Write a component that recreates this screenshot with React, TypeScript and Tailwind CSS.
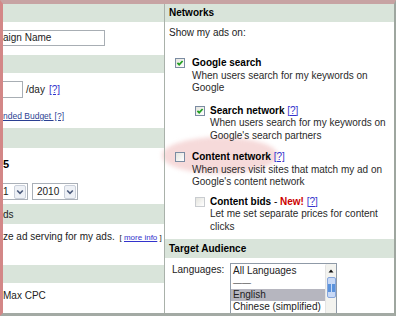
import React from "react";

function Check({ checked = false, disabled = false }: { checked?: boolean; disabled?: boolean }) {
  return (
    <span
      className={`mt-[1px] flex h-[10px] w-[10px] shrink-0 items-center justify-center border bg-gradient-to-br from-[#e4e4de] to-white ${
        disabled ? "border-[#c9ccd0]" : "border-[#7b8ca2]"
      }`}
    >
      {checked && (
        <svg width="8" height="8" viewBox="0 0 8 8">
          <path d="M1.4 3.8 L3.2 5.7 L6.6 2" stroke="#22a022" strokeWidth="1.7" fill="none" />
        </svg>
      )}
    </span>
  );
}

function Help() {
  return <span className="font-normal text-[#3333cc] underline">[?]</span>;
}

function Option({
  indent,
  gap,
  checked,
  disabled,
  title,
  lines,
  className = "",
}: {
  indent: string;
  gap: string;
  checked?: boolean;
  disabled?: boolean;
  title: React.ReactNode;
  lines: string[];
  className?: string;
}) {
  return (
    <div className={`flex items-start ${indent} ${className}`}>
      <Check checked={checked} disabled={disabled} />
      <div className={`${gap} leading-[12.5px]`}>
        <div className="font-bold text-black">{title}</div>
        {lines.map((l) => (
          <div key={l} className="text-[#2a2a2a]">
            {l}
          </div>
        ))}
      </div>
    </div>
  );
}

function Select({ value, width }: { value: string; width: string }) {
  return (
    <div className={`flex h-[17px] ${width} items-center border border-[#aab0b8] bg-white`}>
      <span className="leading-none">{value}</span>
      <span className="ml-auto mr-[1px] flex h-[14px] w-[12px] items-center justify-center rounded-[2px] border border-[#c9cfda] bg-[#eef1f6]">
        <svg width="8" height="6" viewBox="0 0 8 6">
          <path d="M1.2 1.5 L4 4.3 L6.8 1.5" stroke="#4b5b7c" strokeWidth="1.6" fill="none" />
        </svg>
      </span>
    </div>
  );
}

const band = "bg-[#d9e4da]";

export default function App() {
  return (
    <div className="relative h-[317px] w-[400px] overflow-hidden bg-white font-['Liberation_Sans',Arial,sans-serif] text-[10px] text-[#222]">
      <div className="absolute left-[162px] top-[137px] h-[37px] w-[116px] rounded-[50%] bg-[#f6dada] blur-[2px]" />

      <div className="relative flex h-[316px] w-[396px] border-l-[3px] border-t-[4px] border-r-2 border-b-[3px] border-l-[#d38787] border-t-[#c7a3a3] border-r-[#9ea69f] border-b-[#a3aaa4]">
        {/* left column, scrolled off to the left */}
        <div className="flex w-[162px] shrink-0 flex-col overflow-hidden border-r border-[#a9b1aa]">
          <div className={`h-[18px] ${band}`} />
          <div className="h-[33px] pt-[8px]">
            <div className="flex h-[16px] w-[102px] items-center border border-l-0 border-[#a8aeb4] leading-none">
              aign Name
            </div>
          </div>
          <div className={`h-[18px] ${band}`} />
          <div className="h-[55px] pt-[8px]">
            <div className="flex items-center">
              <div className="h-[17px] w-[20px] border border-l-0 border-[#a8aeb4]" />
              <span className="ml-[3px]">/day</span>
              <span className="ml-[4px] text-[#3333cc] underline">[?]</span>
            </div>
            <div className="mt-[12px] text-[8.5px] leading-[12px] text-[#2b3f92] underline">
              nded Budget <span className="ml-[1px]">[?]</span>
            </div>
          </div>
          <div className={`h-[20px] ${band}`} />
          <div className="h-[56px] pt-[10px]">
            <div className="text-[11px] font-bold leading-[12px] text-black">5</div>
            <div className="mt-[13px] flex gap-[4px]">
              <Select value="1" width="w-[25px] border-l-0" />
              <Select value="2010" width="w-[46px] pl-[4px]" />
            </div>
          </div>
          <div className={`flex h-[20px] items-center ${band}`}>ds</div>
          <div className="h-[41px] pt-[7px] leading-[12px]">
            ze ad serving for my ads.{" "}
            <span className="ml-[2px] text-[8px]">
              [ <span className="text-[#3333cc] underline">more info</span> ]
            </span>
          </div>
          <div className={`h-[18px] ${band}`} />
          <div className="pt-[7px] leading-[12px]">Max CPC</div>
        </div>

        {/* right column */}
        <div className="flex flex-1 flex-col overflow-hidden">
          <div className={`h-[18px] pl-[4px] font-bold leading-[18px] text-black ${band}`}>Networks</div>
          <div className="mt-[5px] pl-[4px] leading-[12px]">Show my ads on:</div>

          <Option
            className="mt-[18px]"
            indent="ml-[10px]"
            gap="ml-[7px]"
            checked
            title="Google search"
            lines={["When users search for my keywords on", "Google"]}
          />
          <Option
            className="mt-[10px]"
            indent="ml-[30px]"
            gap="ml-[5px]"
            checked
            title={
              <>
                Search network <Help />
              </>
            }
            lines={["When users search for my keywords on", "Google's search partners"]}
          />
          <Option
            className="mt-[9px]"
            indent="ml-[10px]"
            gap="ml-[7px]"
            title={
              <>
                Content network <Help />
              </>
            }
            lines={["When users visit sites that match my ad on", "Google's content network"]}
          />
          <Option
            className="mt-[7px]"
            indent="ml-[30px]"
            gap="ml-[5px]"
            disabled
            title={
              <>
                Content bids <span className="font-normal">-</span>{" "}
                <span className="text-[#cc0000]">New!</span> <Help />
              </>
            }
            lines={["Let me set separate prices for content", "clicks"]}
          />

          <div className={`mt-[6px] h-[19px] pl-[4px] font-bold leading-[19px] text-black ${band}`}>
            Target Audience
          </div>
          <div className="mt-[5px] flex pl-[7px]">
            <div className="mt-[1px] w-[58px] leading-[12px]">Languages:</div>
            <div className="flex h-[60px] w-[107px] border border-[#8f9aa7] bg-white">
              <div className="flex-1 pt-[1px] leading-[12px]">
                <div className="pl-[2px]">All Languages</div>
                <div className="pl-[2px] text-[9px]">——</div>
                <div className="bg-[#b6b6bf] pl-[2px]">English</div>
                <div className="pl-[2px]">Chinese (simplified)</div>
                <div className="pl-[2px]">Chinese (traditional)</div>
              </div>
              <div className="flex w-[11px] flex-col items-center rounded-[2px] border-l border-[#e4e4e4] bg-[#f3f3ef]">
                <div className="mt-[2px] flex h-[9px] items-center justify-center">
                  <svg width="6" height="4" viewBox="0 0 6 4">
                    <path d="M0.5 3.5 L3 0.5 L5.5 3.5 Z" fill="#111" />
                  </svg>
                </div>
                <div className="mt-[2px] flex h-[21px] w-[9px] items-center justify-center rounded-[2px] border border-[#86a6dc] bg-[#c8d9f6]">
                  <div className="flex h-[8px] w-[7px] gap-[1px]">
                    <div className="flex-1 bg-[#5b93dc]" />
                    <div className="flex-1 bg-[#5b93dc]" />
                  </div>
                </div>
              </div>
            </div>
          </div>
        </div>
      </div>
    </div>
  );
}
